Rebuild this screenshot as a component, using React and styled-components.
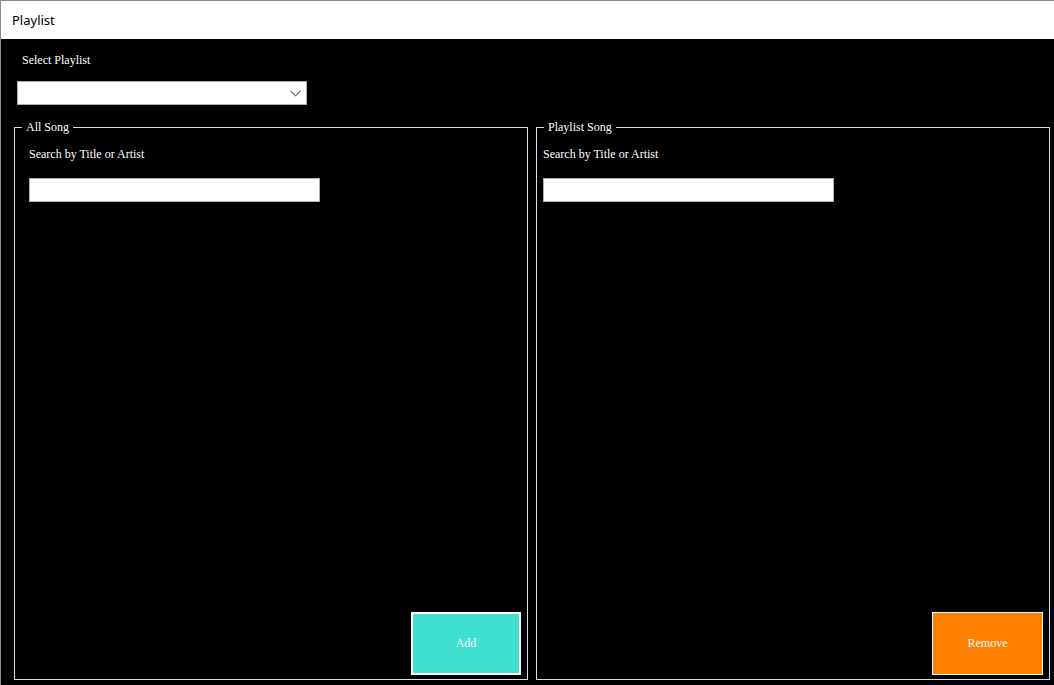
import styled, { createGlobalStyle } from "styled-components";

const GlobalStyle = createGlobalStyle`
  html, body {
    margin: 0;
    padding: 0;
    background: #000;
  }
  * {
    box-sizing: border-box;
  }
`;

const Window = styled.div`
  width: 1054px;
  height: 685px;
  display: flex;
  flex-direction: column;
  border-top: 1px solid #8a8a8a;
  border-left: 1px solid #8a8a8a;
  background: #000;
  overflow: hidden;
`;

const TitleBar = styled.div`
  height: 38px;
  flex-shrink: 0;
  background: #fff;
  display: flex;
  align-items: center;
  padding-left: 11px;
  font-family: "Noto Sans", "Open Sans", sans-serif;
  font-size: 13px;
  color: #000;
`;

const Content = styled.div`
  flex: 1;
  display: flex;
  flex-direction: column;
  padding: 14px 4px 5px 13px;
  min-height: 0;
`;

const Label = styled.div`
  font-family: "Liberation Serif", "DejaVu Serif", serif;
  font-size: 12px;
  line-height: 14px;
  color: #fff;
  margin-left: ${(p) => p.$indent || 0}px;
`;

const ComboBox = styled.div`
  width: 290px;
  height: 24px;
  margin: 14px 0 0 3px;
  background: #fff;
  border: 1px solid #acacac;
  display: flex;
  align-items: center;
  justify-content: flex-end;
  padding-right: 5px;
`;

const GroupRow = styled.div`
  flex: 1;
  display: flex;
  gap: 8px;
  margin-top: 15px;
  min-height: 0;
`;

const GroupBox = styled.fieldset`
  width: 514px;
  margin: 0;
  padding: 0;
  border: 1px solid #d5dfe5;
  display: flex;
  flex-direction: column;
  min-width: 0;
`;

const Legend = styled.legend`
  margin-left: 7px;
  padding: 0 4px;
  font-family: "Liberation Serif", "DejaVu Serif", serif;
  font-size: 12px;
  line-height: 14px;
  color: #fff;
`;

const GroupBody = styled.div`
  flex: 1;
  display: flex;
  flex-direction: column;
  padding: 13px 6px 4px ${(p) => p.$padLeft}px;
`;

const SearchInput = styled.input`
  width: 291px;
  height: 24px;
  margin-top: 17px;
  border: 1px solid #abadb3;
  background: #fff;
  outline: none;
  padding: 0 3px;
`;

const ActionButton = styled.button`
  margin-top: auto;
  align-self: flex-end;
  width: ${(p) => p.$width}px;
  height: 63px;
  background: ${(p) => p.$bg};
  border: ${(p) => p.$border}px solid #fff;
  color: #fff;
  font-family: "Liberation Serif", "DejaVu Serif", serif;
  font-size: 12px;
  padding: 0;
  cursor: pointer;
`;

function Chevron() {
  return (
    <svg width="11" height="7" viewBox="0 0 11 7">
      <path d="M0.5 0.8 L5.5 5.8 L10.5 0.8" fill="none" stroke="#606060" strokeWidth="1.1" />
    </svg>
  );
}

function SongGroup({ title, padLeft, button }) {
  return (
    <GroupBox>
      <Legend>{title}</Legend>
      <GroupBody $padLeft={padLeft}>
        <Label>Search by Title or Artist</Label>
        <SearchInput type="text" />
        <ActionButton $width={button.width} $bg={button.bg} $border={button.border}>
          {button.label}
        </ActionButton>
      </GroupBody>
    </GroupBox>
  );
}

export default function App() {
  const groups = [
    {
      title: "All Song",
      padLeft: 14,
      button: { label: "Add", bg: "#40e0d0", border: 2, width: 110 },
    },
    {
      title: "Playlist Song",
      padLeft: 6,
      button: { label: "Remove", bg: "#ff8000", border: 1, width: 111 },
    },
  ];

  return (
    <>
      <GlobalStyle />
      <Window>
        <TitleBar>Playlist</TitleBar>
        <Content>
          <Label $indent={8}>Select Playlist</Label>
          <ComboBox>
            <Chevron />
          </ComboBox>
          <GroupRow>
            {groups.map((g) => (
              <SongGroup key={g.title} {...g} />
            ))}
          </GroupRow>
        </Content>
      </Window>
    </>
  );
}
